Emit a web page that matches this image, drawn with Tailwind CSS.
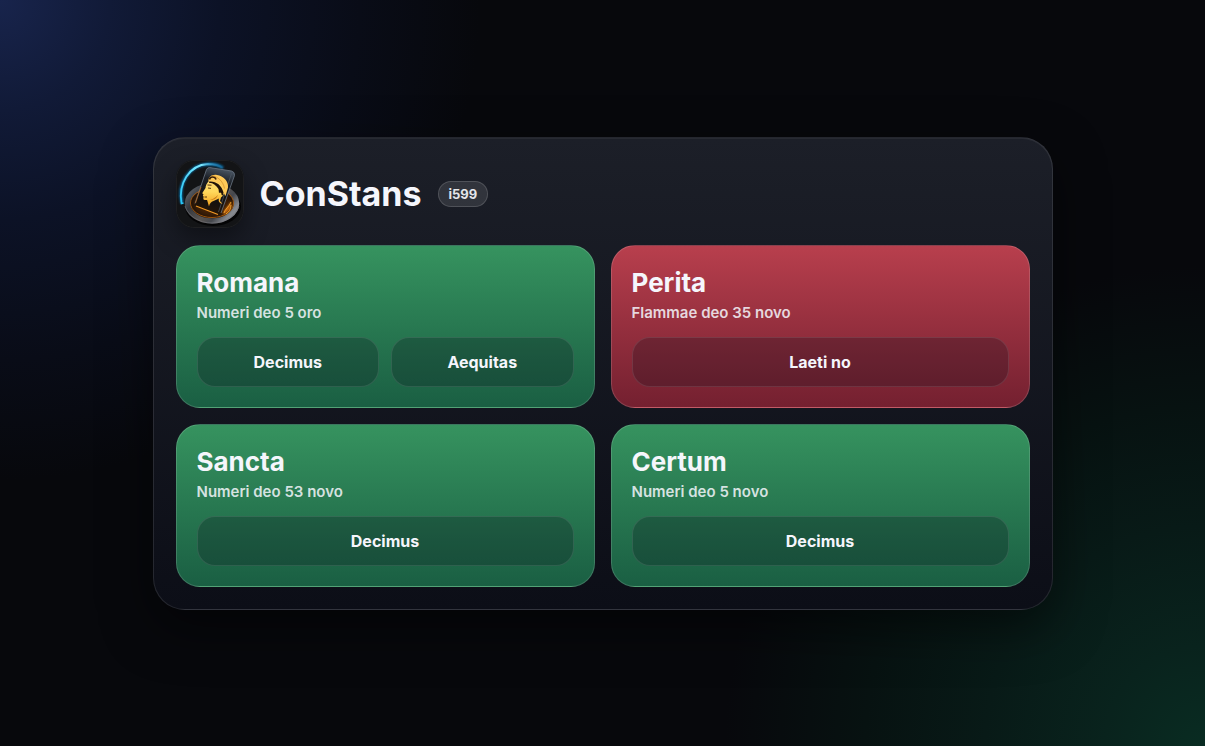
<!DOCTYPE html>
<html lang="la">

<head>
    <meta charset="UTF-8">
    <meta name="viewport" content="width=device-width, initial-scale=1.0">
    <title>ConStans</title>
    <script src="https://cdn.jsdelivr.net/npm/@tailwindcss/browser@4"></script>
</head>

<body class="min-h-screen flex items-center justify-center p-6 font-['Inter',sans-serif] text-[#f5f6fc] bg-[#07080c] bg-[radial-gradient(circle_at_0_0,#18244c_0,#111a37_110px,#0c1226_220px,#090c17_360px,transparent_480px),radial-gradient(circle_at_100%_100%,#092c22_0,#09231d_100px,#081a17_220px,#071211_340px,transparent_480px)]">
    <!-- Panel -->
    <main class="w-full max-w-[900px] rounded-[32px] border border-white/10 bg-linear-to-b from-[#1c1f28] to-[#0c0e17] p-[22px] shadow-[0_18px_50px_rgba(0,0,0,0.5),inset_0_1px_0_rgba(255,255,255,0.05)]">
        <!-- Header -->
        <header class="flex items-center gap-4 mb-[17px]">
            <svg class="size-[68px] rounded-[18px] shadow-[0_10px_24px_rgba(0,0,0,0.4)]" viewBox="0 0 68 68" role="img" aria-label="ConStans">
                <defs>
                    <linearGradient id="ring" x1="0" y1="0" x2="1" y2=".6">
                        <stop offset="0" stop-color="#686d74" />
                        <stop offset=".3" stop-color="#34373d" />
                        <stop offset=".6" stop-color="#5a5552" />
                        <stop offset=".8" stop-color="#45474d" />
                        <stop offset="1" stop-color="#86898f" />
                    </linearGradient>
                    <linearGradient id="phone" x1=".5" y1="0" x2=".3" y2="1">
                        <stop offset="0" stop-color="#46525f" />
                        <stop offset=".25" stop-color="#1c2027" />
                        <stop offset=".7" stop-color="#15110f" />
                        <stop offset="1" stop-color="#2a1605" />
                    </linearGradient>
                    <linearGradient id="gold" x1="0" y1="0" x2="0" y2="1">
                        <stop offset="0" stop-color="#ffd773" />
                        <stop offset=".45" stop-color="#ffd95c" />
                        <stop offset="1" stop-color="#f2a01c" />
                    </linearGradient>
                    <linearGradient id="arc" gradientUnits="userSpaceOnUse" x1="6" y1="44" x2="50" y2="8">
                        <stop offset="0" stop-color="#25c4f5" />
                        <stop offset=".7" stop-color="#7deaff" />
                        <stop offset="1" stop-color="#1685c8" stop-opacity="0" />
                    </linearGradient>
                    <radialGradient id="well">
                        <stop offset="0" stop-color="#6a3405" />
                        <stop offset=".7" stop-color="#331a07" />
                        <stop offset="1" stop-color="#0c0807" />
                    </radialGradient>
                    <filter id="glow" x="-30%" y="-30%" width="160%" height="160%">
                        <feGaussianBlur stdDeviation="1.2" />
                    </filter>
                </defs>
                <rect width="68" height="68" fill="#131416" />
                <!-- Blue arc -->
                <path d="M6 43C1 24 13 5 32 4c6 0 11 1 15 4" fill="none" stroke="#0b9cf0" stroke-width="3" filter="url(#glow)" opacity=".7" />
                <path d="M7.500 43 5.500 43.500C2 24 13 5 32 4c6 0 11 1 15 4" fill="none" stroke="url(#arc)" stroke-width="1.800" />
                <!-- Ring -->
                <ellipse cx="37" cy="46.500" rx="28" ry="19.500" fill="#040405" />
                <ellipse cx="36" cy="43.500" rx="24.500" ry="17.500" fill="url(#well)" stroke="url(#ring)" stroke-width="5.500" />
                <ellipse cx="36" cy="43" rx="21.500" ry="14.500" fill="none" stroke="#b9630f" stroke-width=".8" />
                <path d="M9 46c3 10 14 17 27 17s24-7 27-17" fill="none" stroke="#77757a" stroke-width=".6" />
                <path d="M47 54c1-5 6-8 8-13 2 6-2 11-8 14z" fill="#d8720d" filter="url(#glow)" />
                <path d="M48 53c1-4 5-6 7-11M50 54c3-2 5-5 5-9" fill="none" stroke="#ffb43a" stroke-width=".8" />
                <!-- Phone -->
                <path d="M33.500 7.500 55.500 11Q59 12 58.500 15.500L45 53Q44 55.500 41.500 54.500L20.500 46.500Q18.500 45.500 19 43.500L30.500 9.500Q31.500 7.500 33.500 7.500z" fill="url(#phone)" />
                <path d="M19 43.500 30.500 9.500Q31.500 7.500 33.500 7.500L55.500 11Q59 12 58.500 15.500L45 53" fill="none" stroke="#6d7987" stroke-width=".8" />
                <path d="M55.500 13.500 42.500 52" stroke="#505a65" stroke-width=".7" />
                <path d="M20 46 42 54.500" stroke="#f39a25" stroke-width="1.200" />
                <path d="M19.500 43 25 27" stroke="#c66b14" stroke-width=".7" />
                <!-- Face and neck -->
                <path d="M33 21c-2 2-3.500 4.500-3.500 7l-3.300 5.200 1.300 1-.7 1.500.8.800-.3 2.500c.5 1.300 2.500.8 3.800 1l1.900 6.500c.5-3 2-4.500 4.500-5.500l5.500-2.500c-1 3 .5 4.500 3.500 5.500l-2.500-3 1-3.500c3-2 4-6 3.500-9l-3-6-8-3z" fill="url(#gold)" />
                <!-- Cap -->
                <path d="M32.500 21.500C32 17 36 14 41 15c6.500 1 11.500 6 11 12.500l-2.500 8.500-2-3.500C47.500 26 42 21 32.500 21.500z" fill="#ffc957" />
                <path d="M33.500 19.500C34 16.500 39 16 40 19.500" fill="none" stroke="#3a2008" stroke-width="1.600" />
                <path d="M36 15.500c5 1 11 5 12.500 13" fill="none" stroke="#c98422" stroke-width=".6" />
                <!-- Hair -->
                <path d="M33 21.700c6.500-.8 12.500 3.300 14.500 10.800l-.5 3-1.500-.5c.5-2-1.500-3.500-2.500-2l-.5-4c-2-3.500-5-6-9.500-6.300z" fill="#241407" />
                <!-- Features -->
                <path d="M31.500 25 35.500 25.200M32 28l3 .4M28.500 37h2.500" fill="none" stroke="#4a2607" stroke-width=".9" />
                <path d="M42 35c-1 3-4 5-8 5 2-.2 5-2 8-5z" fill="#c97a1a" />
                <rect x=".5" y=".5" width="67" height="67" rx="17.500" fill="none" stroke="#fff" stroke-opacity=".05" />
            </svg>
            <h1 class="text-[34px] leading-10 font-bold">ConStans</h1>
            <span class="rounded-full border border-white/15 bg-white/10 px-2.5 py-1 text-[13px] leading-4 font-bold text-[#e4e5ea]">i599</span>
        </header>

        <!-- Cards -->
        <div class="grid grid-cols-1 sm:grid-cols-2 gap-4">
            <section class="rounded-3xl border border-white/15 bg-linear-to-b from-[#36935f] to-[#1a5f43] p-5">
                <h2 class="text-[26px] leading-[34px] font-bold">Romana</h2>
                <p class="mt-[3px] text-[15px] leading-5 font-semibold text-[#f5f6fc]/85">Numeri deo 5 oro</p>
                <div class="mt-[14px] grid grid-cols-2 gap-3">
                    <button type="button" class="h-[50px] rounded-[18px] border border-white/10 bg-[#080a18]/25 text-base font-bold cursor-pointer">Decimus</button>
                    <button type="button" class="h-[50px] rounded-[18px] border border-white/10 bg-[#080a18]/25 text-base font-bold cursor-pointer">Aequitas</button>
                </div>
            </section>

            <section class="rounded-3xl border border-white/15 bg-linear-to-b from-[#b83f4d] to-[#742030] p-5">
                <h2 class="text-[26px] leading-[34px] font-bold">Perita</h2>
                <p class="mt-[3px] text-[15px] leading-5 font-semibold text-[#f5f6fc]/85">Flammae deo 35 novo</p>
                <div class="mt-[14px] grid">
                    <button type="button" class="h-[50px] rounded-[18px] border border-white/10 bg-[#080a18]/25 text-base font-bold cursor-pointer">Laeti no</button>
                </div>
            </section>

            <section class="rounded-3xl border border-white/15 bg-linear-to-b from-[#36935f] to-[#1a5f43] p-5">
                <h2 class="text-[26px] leading-[34px] font-bold">Sancta</h2>
                <p class="mt-[3px] text-[15px] leading-5 font-semibold text-[#f5f6fc]/85">Numeri deo 53 novo</p>
                <div class="mt-[14px] grid">
                    <button type="button" class="h-[50px] rounded-[18px] border border-white/10 bg-[#080a18]/25 text-base font-bold cursor-pointer">Decimus</button>
                </div>
            </section>

            <section class="rounded-3xl border border-white/15 bg-linear-to-b from-[#36935f] to-[#1a5f43] p-5">
                <h2 class="text-[26px] leading-[34px] font-bold">Certum</h2>
                <p class="mt-[3px] text-[15px] leading-5 font-semibold text-[#f5f6fc]/85">Numeri deo 5 novo</p>
                <div class="mt-[14px] grid">
                    <button type="button" class="h-[50px] rounded-[18px] border border-white/10 bg-[#080a18]/25 text-base font-bold cursor-pointer">Decimus</button>
                </div>
            </section>
        </div>
    </main>
</body>

</html>
